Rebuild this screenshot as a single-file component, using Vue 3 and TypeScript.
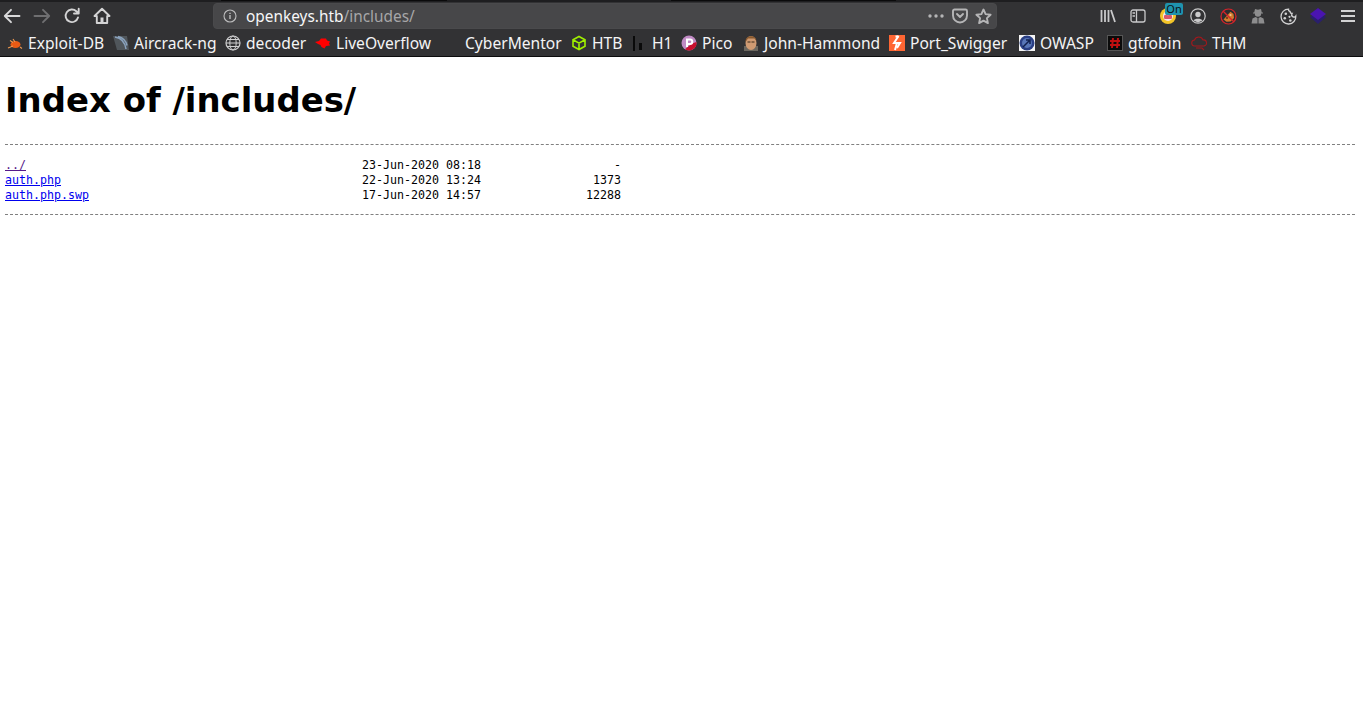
<template>
  <div class="browser">
    <header class="chrome">
      <div class="tabline"><span class="tab-edge first"></span><span class="tab-edge second"></span></div>

      <div class="navbar">
        <div class="nav-left">
          <button class="nav-btn">
            <svg width="18" height="18" viewBox="0 0 18 18"><path d="M16.500 9H1.800M8 2.800L1.800 9 8 15.200" class="st" stroke="#d9d9da" /></svg>
          </button>
          <button class="nav-btn">
            <svg width="18" height="18" viewBox="0 0 18 18"><path d="M1.500 9h14.700M10 2.800L16.200 9 10 15.200" class="st" stroke="#6f6f71" /></svg>
          </button>
          <button class="nav-btn">
            <svg width="18" height="18" viewBox="0 0 18 18"><path d="M15 10.500A6.300 6.300 0 1 1 13.300 4.200l2 2M15.700 1.800v4.700H11" class="st" stroke="#d4d4d5" /></svg>
          </button>
          <button class="nav-btn">
            <svg width="18" height="18" viewBox="0 0 18 18"><path d="M9 1.800L1.500 9h2.300v7h10.400V9h2.300z" class="st" stroke="#d4d4d5" /><rect x="7.500" y="10.500" width="3" height="5" fill="#d4d4d5" /></svg>
          </button>
        </div>

        <div class="urlbar">
          <svg class="info" width="14" height="14" viewBox="0 0 14 14">
            <circle cx="7" cy="7" r="6" fill="none" stroke="#bdbdbe" stroke-width="1.100" />
            <path d="M7 6v4M7 3.800v1.200" stroke="#bdbdbe" stroke-width="1.400" />
          </svg>
          <span class="url"><span class="host">openkeys.htb</span><span class="path">/includes/</span></span>
          <span class="url-tools">
            <svg width="18" height="6" viewBox="0 0 18 6"><circle cx="3" cy="3" r="1.700" fill="#b5b5b6" /><circle cx="9" cy="3" r="1.700" fill="#b5b5b6" /><circle cx="15" cy="3" r="1.700" fill="#b5b5b6" /></svg>
            <svg width="16" height="16" viewBox="0 0 16 16"><path d="M2.500 1.500h11A1.500 1.500 0 0 1 15 3v4.500a7 7 0 0 1-14 0V3a1.500 1.500 0 0 1 1.500-1.500z" class="st" stroke="#b5b5b6" /><path d="M5 6l3 3 3-3" class="st" stroke="#b5b5b6" /></svg>
            <svg width="17" height="17" viewBox="0 0 17 17"><path d="M8.500 1.500l2.100 4.600 5 .6-3.700 3.400 1 5-4.400-2.500-4.400 2.500 1-5L1.400 6.700l5-.6z" class="st" stroke="#b5b5b6" /></svg>
          </span>
        </div>

        <div class="nav-right">
          <svg width="16" height="16" viewBox="0 0 16 16"><path d="M1.500 2v12M5 2v12M8.500 2v12M11 2l4 12" fill="none" stroke="#c9c9ca" stroke-width="1.800" /></svg>
          <svg width="16" height="16" viewBox="0 0 16 16"><rect x="1" y="2" width="14" height="12" rx="2" fill="none" stroke="#c9c9ca" stroke-width="1.300" /><path d="M6.500 2v12M2.500 5h2.500M2.500 8h2.500" stroke="#c9c9ca" stroke-width="1.300" /></svg>
          <span class="r-ublock">
            <svg width="16" height="16" viewBox="0 0 16 16">
              <circle cx="8" cy="8" r="8" fill="#f3c528" />
              <circle cx="8" cy="8" r="5" fill="#f6e9e9" />
              <rect x="4" y="7" width="8" height="4" rx="1" fill="#d8566c" />
              <circle cx="8" cy="5.500" r="2" fill="#e58a98" />
            </svg>
            <span class="badge">On</span>
          </span>
          <svg width="16" height="16" viewBox="0 0 16 16"><circle cx="8" cy="8" r="7.200" fill="none" stroke="#c9c9ca" stroke-width="1.200" /><circle cx="8" cy="6.500" r="2.700" fill="#c9c9ca" /><path d="M3.500 12.500c1-2.500 8-2.500 9 0L8 14.500z" fill="#c9c9ca" /></svg>
          <svg width="17" height="17" viewBox="0 0 17 17">
            <circle cx="8.500" cy="8.500" r="6.800" fill="#2c2c2e" />
            <path d="M3.500 11.500L10.500 3.800l3 2.200 .5 4-3.500 3.500-4 .3z" fill="#d27a2c" />
            <circle cx="7" cy="10" r="1.100" fill="#6d3a14" />
            <circle cx="10.500" cy="7" r="1.100" fill="#f0c48e" />
            <circle cx="8.500" cy="8.500" r="7.500" fill="none" stroke="#d8232a" stroke-width="1.200" />
            <path d="M3.200 3.200l10.600 10.600" stroke="#d8232a" stroke-width="1.300" />
          </svg>
          <svg width="16" height="16" viewBox="0 0 16 16"><path d="M5 1l3 .8L11 1l.8 3.500H13v1h-1.800a3.200 3.200 0 0 1-6.400 0H3v-1h1.200z" fill="#8d8d8e" /><path d="M1.500 15.500l1-5 3-1.500 2 1v5.500zM14.500 15.500l-1-5-3-1.500-2 1v5.500z" fill="#8d8d8e" /></svg>
          <svg width="17" height="17" viewBox="0 0 17 17">
            <path d="M8.500 1.200a2 2 0 0 0 1.600 2.300 2 2 0 0 0 2 2 2 2 0 0 0 3.700 2.500 7.400 7.400 0 1 1-7.300-6.800z" fill="none" stroke="#d2d2d3" stroke-width="1.300" />
            <circle cx="5.800" cy="5.800" r="1.300" fill="#d2d2d3" /><circle cx="4.800" cy="10.300" r="1.300" fill="#d2d2d3" /><circle cx="9.500" cy="8.800" r="1.100" fill="#d2d2d3" /><circle cx="10.300" cy="12.500" r="1.300" fill="#d2d2d3" />
          </svg>
          <svg width="16" height="16" viewBox="0 0 16 16"><path d="M0 9l8-4 8 4-8 7z" fill="#2a1f6e" /><path d="M0 6l8-6 8 6-8 6z" fill="#4a14b0" /></svg>
          <svg width="14" height="14" viewBox="0 0 14 14"><path d="M0 2h14M0 7h14M0 12h14" stroke="#d2d2d3" stroke-width="2" /></svg>
        </div>
      </div>

      <div class="bookmarks">
        <span v-for="b in bookmarks" :key="b.label" class="bookmark" :style="{ width: b.width + 'px' }">
          <svg v-if="b.icon !== 'none'" class="fav" width="16" height="16" viewBox="0 0 16 16">
            <template v-if="b.icon === 'bug'">
              <ellipse cx="8.500" cy="9.500" rx="5" ry="3.500" fill="#e85a14" />
              <path d="M1 13l5-2M3 5.500l3 2M6 4l2 3M13 12l2 1.500" stroke="#f09a50" stroke-width="1.100" />
            </template>
            <template v-else-if="b.icon === 'aircrack'">
              <path d="M0 1h14l2 14H4z" fill="#50565b" />
              <path d="M2 2c6 1 10 5 11 12M5 1.500c4 1 8 4 9 9" fill="none" stroke="#8aa2bd" stroke-width="1.500" />
            </template>
            <template v-else-if="b.icon === 'globe'">
              <circle cx="8" cy="8" r="7" fill="none" stroke="#cfcfd0" stroke-width="1.200" />
              <ellipse cx="8" cy="8" rx="3.200" ry="7" fill="none" stroke="#cfcfd0" />
              <path d="M1 8h14M2 4.500h12M2 11.500h12" stroke="#cfcfd0" />
            </template>
            <template v-else-if="b.icon === 'lo'">
              <path d="M0 7l4-1 2-2.500h5l1 2 3 1-1 2 1 2-4 .5-1.500 2.500-3-1.500-1-2L3 9z" fill="#f00" />
            </template>
            <template v-else-if="b.icon === 'htb'">
              <path d="M8 1.500l6 3.300v6.400l-6 3.300-6-3.300V4.800zM2 4.800l6 3.400 6-3.400M8 8.200v6.600" fill="none" stroke="#9fef00" stroke-width="1.600" />
            </template>
            <template v-else-if="b.icon === 'h1'">
              <rect x="2" y="1" width="2" height="15" fill="#0a0a0a" />
              <rect x="8" y="8" width="3" height="7" fill="#0a0a0a" />
            </template>
            <template v-else-if="b.icon === 'pico'">
              <circle cx="8" cy="8" r="7.500" fill="#c08ac4" />
              <path d="M15.500 7A7.500 7.500 0 0 1 4 14.300l7-5.800z" fill="#c8102e" />
              <path d="M6 12V4.500h3a2.200 2.200 0 0 1 0 4.500H6" fill="none" stroke="#fff" stroke-width="2" />
            </template>
            <template v-else-if="b.icon === 'john'">
              <rect x="1" y="11" width="14" height="5" fill="#6b675f" />
              <ellipse cx="8" cy="8" rx="5.500" ry="7" fill="#cf9a72" />
              <path d="M2.500 7C2 0 13 -1 13.500 6l-2-2.500H5z" fill="#8b5a2e" />
              <path d="M4.500 7h3M8.500 7h3" stroke="#3b2a1a" />
            </template>
            <template v-else-if="b.icon === 'burp'">
              <rect width="16" height="16" fill="#ff6633" />
              <path d="M9.500 1L5 8h3l-2 7" fill="none" stroke="#fff" stroke-width="2" />
              <path d="M6.500 1.500h3M8 8h3l-3 5" fill="none" stroke="#fff" stroke-width="2" />
            </template>
            <template v-else-if="b.icon === 'owasp'">
              <rect width="16" height="16" fill="#f4f4f4" />
              <circle cx="8" cy="8" r="7.500" fill="#2a3f85" />
              <circle cx="8" cy="8" r="5" fill="#5876b8" />
              <path d="M4 12l7-7M7 5h4v4" fill="none" stroke="#10204f" stroke-width="1.500" />
            </template>
            <template v-else-if="b.icon === 'gtfo'">
              <rect x="0.500" y="0.500" width="15" height="15" fill="#0b0b0b" stroke="#555" />
              <path d="M6 3L5 13M11 3l-1 10M3 6h10M3 10h10" stroke="#c01010" stroke-width="2" />
            </template>
            <template v-else>
              <path d="M4 11a3 3 0 0 1-.5-6A4.500 4.500 0 0 1 12 5a3 3 0 0 1 1 6zM5 13h6l2 2" fill="none" stroke="#a3181c" stroke-width="1.100" />
            </template>
          </svg>
          <span class="bm-label">{{ b.label }}</span>
        </span>
      </div>
    </header>

    <main class="listing">
      <h1>Index of /includes/</h1>
      <hr />
      <pre><template v-for="row in rows" :key="row.name"><a :href="row.name" :class="{ visited: row.visited }">{{ row.name }}</a>{{ pad(row) }}
</template></pre>
      <hr />
    </main>
  </div>
</template>

<script setup lang="ts">
interface Bookmark {
  label: string
  icon: string
  width: number
}

interface Row {
  name: string
  date: string
  size: string
  visited?: boolean
}

const bookmarks: Bookmark[] = [
  { label: 'Exploit-DB', icon: 'bug', width: 106 },
  { label: 'Aircrack-ng', icon: 'aircrack', width: 112 },
  { label: 'decoder', icon: 'globe', width: 90 },
  { label: 'LiveOverflow', icon: 'lo', width: 150 },
  { label: 'CyberMentor', icon: 'none', width: 106 },
  { label: 'HTB', icon: 'htb', width: 60 },
  { label: 'H1', icon: 'h1', width: 50 },
  { label: 'Pico', icon: 'pico', width: 62 },
  { label: 'John-Hammond', icon: 'john', width: 146 },
  { label: 'Port_Swigger', icon: 'burp', width: 130 },
  { label: 'OWASP', icon: 'owasp', width: 88 },
  { label: 'gtfobin', icon: 'gtfo', width: 84 },
  { label: 'THM', icon: 'cloud', width: 60 },
]

const rows: Row[] = [
  { name: '../', date: '23-Jun-2020 08:18', size: '-', visited: true },
  { name: 'auth.php', date: '22-Jun-2020 13:24', size: '1373' },
  { name: 'auth.php.swp', date: '17-Jun-2020 14:57', size: '12288' },
]

// same columns nginx autoindex uses
function pad(row: Row): string {
  return ' '.repeat(51 - row.name.length) + row.date + row.size.padStart(20)
}
</script>

<style scoped>
.browser {
  min-height: 715px;
  background: #fff;
}

.chrome {
  background: #323234;
  color: #f4f4f5;
  font-family: "Noto Sans", "Open Sans", sans-serif;
}

.tabline {
  display: flex;
  height: 2px;
  background: #1e1e20;
}

.tab-edge {
  display: block;
  height: 1px;
  background: #0a0a0b;
}

.tab-edge.first {
  width: 226px;
  margin-left: 221px;
}

.tab-edge.second {
  width: 225px;
  margin-left: 224px;
}

.navbar {
  display: flex;
  align-items: center;
  height: 28px;
}

.nav-left {
  display: flex;
  gap: 6px;
  width: 213px;
}

.nav-btn {
  display: flex;
  align-items: center;
  justify-content: center;
  width: 24px;
  height: 24px;
  padding: 0;
  border: 0;
  background: none;
}

.st {
  fill: none;
  stroke-width: 1.900;
  stroke-linecap: round;
  stroke-linejoin: round;
}

.urlbar {
  display: flex;
  align-items: center;
  flex: none;
  width: 784px;
  height: 26px;
  padding: 0 4px 0 9px;
  box-sizing: border-box;
  border: 1px solid #4a4a4c;
  border-radius: 4px;
  background: #474749;
}

.url {
  margin-left: 9px;
  font-size: 15.400px;
  white-space: nowrap;
}

.host {
  color: #f6f6f7;
}

.path {
  color: #a6a6a8;
}

.url-tools {
  display: flex;
  align-items: center;
  gap: 7px;
  margin-left: auto;
}

.nav-right {
  display: grid;
  grid-auto-flow: column;
  grid-auto-columns: 30px;
  align-items: center;
  justify-items: center;
  margin-left: auto;
}

.r-ublock {
  position: relative;
  display: flex;
}

.badge {
  position: absolute;
  top: -5px;
  left: 5px;
  width: 18px;
  height: 12px;
  border-radius: 2px;
  background: #1f93ae;
  color: #0d1113;
  font-size: 11px;
  line-height: 12px;
  text-align: center;
}

.bookmarks {
  display: flex;
  align-items: center;
  height: 26px;
  padding-left: 7px;
  border-bottom: 1px solid #0c0c0d;
}

.bookmark {
  display: flex;
  align-items: center;
  flex: none;
  gap: 5px;
  font-size: 15.600px;
  white-space: nowrap;
}

.fav {
  flex: none;
}

.listing {
  padding: 0 8px 0 5px;
  color: #000;
  font-family: "DejaVu Sans", sans-serif;
}

h1 {
  margin: 0;
  padding: 23px 0 22px;
  font-size: 33.900px;
  font-weight: 700;
  line-height: 42px;
}

hr {
  height: 0;
  margin: 0;
  border: 0;
  border-top: 1px dashed #808080;
}

pre {
  margin: 13px 0 11px;
  font-family: "DejaVu Sans Mono", monospace;
  font-size: 11.630px;
  line-height: 15px;
}

a {
  color: #00e;
}

a.visited {
  color: #551a8b;
}
</style>
